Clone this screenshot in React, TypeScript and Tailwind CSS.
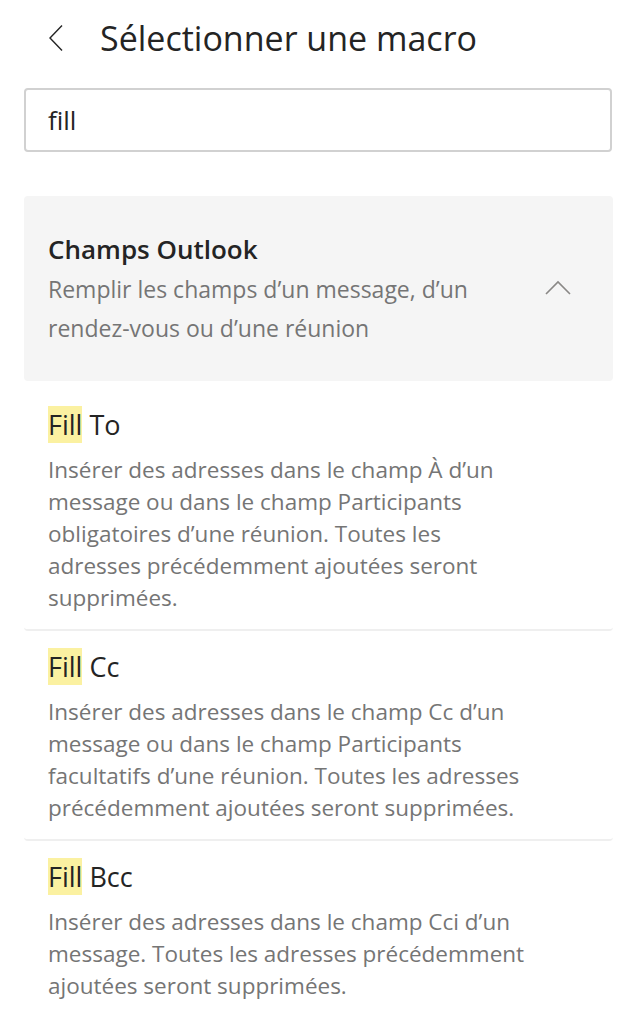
import React from 'react'

const items = [
  {
    rest: 'To',
    desc: 'Insérer des adresses dans le champ À d’un message ou dans le champ Participants obligatoires d’une réunion. Toutes les adresses précédemment ajoutées seront supprimées.',
  },
  {
    rest: 'Cc',
    desc: 'Insérer des adresses dans le champ Cc d’un message ou dans le champ Participants facultatifs d’une réunion. Toutes les adresses précédemment ajoutées seront supprimées.',
  },
  {
    rest: 'Bcc',
    desc: 'Insérer des adresses dans le champ Cci d’un message. Toutes les adresses précédemment ajoutées seront supprimées.',
  },
]

export default function App() {
  return (
    <div className="min-h-screen bg-white text-[#242424] font-['Segoe_UI','Open_Sans',sans-serif]">
      <div className="flex items-center h-[76px] px-[48px]">
        <svg width="16" height="28" viewBox="0 0 16 28" className="shrink-0">
          <path d="M14 1.5 L2 14 L14 26.5" fill="none" stroke="#242424" strokeWidth="1.4" />
        </svg>
        <h1 className="ml-[36px] text-[34px] leading-none">Sélectionner une macro</h1>
      </div>

      <div className="px-[24px] pt-[12px]">
        <div className="h-[64px] rounded-[4px] border-2 border-[#d1d1d1] flex items-center px-[22px]">
          <span className="text-[26px]">fill</span>
        </div>
      </div>

      <div className="pl-[24px] pr-[23px] pt-[44px]">
        <div className="bg-[#f5f5f5] rounded-[4px] pl-[24px] pr-[42px] pt-[37px] pb-[33px] mb-[8px]">
          <div className="text-[26px] font-semibold leading-[32px]">Champs Outlook</div>
          <div className="flex items-start justify-between mt-[5px]">
            <p className="text-[23px] leading-[39px] text-[#757575] w-[450px]">
              Remplir les champs d’un message, d’un rendez-vous ou d’une réunion
            </p>
            <svg width="26" height="16" viewBox="0 0 26 16" className="mt-[10px] shrink-0">
              <path d="M1 14 L13 2 L25 14" fill="none" stroke="#8a8886" strokeWidth="1.6" />
            </svg>
          </div>
        </div>

        {items.map((it, i) => (
          <div
            key={it.rest}
            className={`px-[24px] pt-[17px] pb-[15px] ${i < items.length - 1 ? 'border-b-2 border-[#efefef] rounded-b-[4px]' : ''}`}
          >
            <div className="text-[27px] leading-[37px] h-[37px]">
              <span className="inline-block bg-[#fbf1a1] h-[37px]">Fill</span> {it.rest}
            </div>
            <p className="mt-[11px] text-[22.5px] leading-[32px] text-[#757575] max-w-[490px]">{it.desc}</p>
          </div>
        ))}
      </div>
    </div>
  )
}
